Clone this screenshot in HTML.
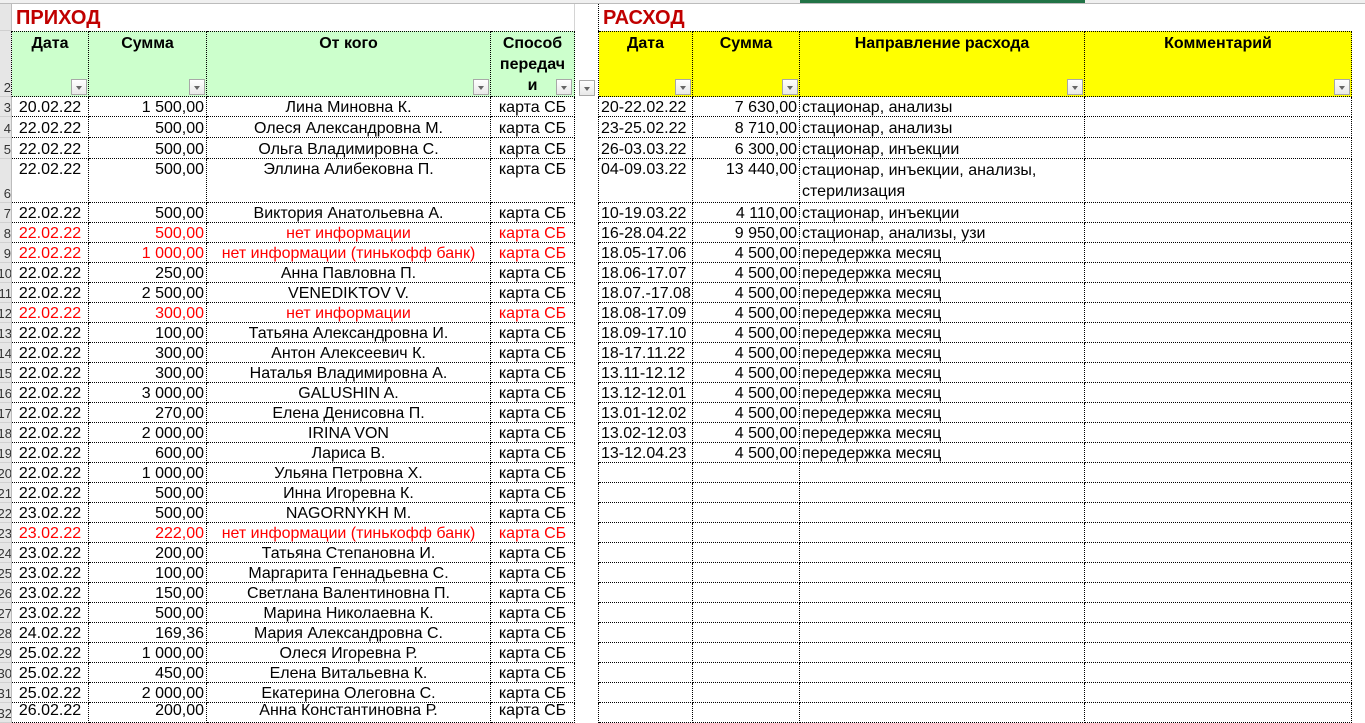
<!DOCTYPE html>
<html><head><meta charset="utf-8">
<style>
body{margin:0;width:1365px;height:710px;overflow:hidden;background:#fff;font-family:"Liberation Sans",sans-serif;position:relative}
.top{position:absolute;left:0;top:0;width:1365px;height:4px;background:#f0f0f0;border-bottom:1px solid #bcbcbc;box-sizing:border-box}
.sel{position:absolute;left:800px;top:0;width:285px;height:3px;background:#217346}
table{position:absolute;left:0;top:4px;width:1365px;border-collapse:separate;border-spacing:0;table-layout:fixed}
td{padding:0;font-size:16px;line-height:16px;vertical-align:bottom;white-space:nowrap;overflow:hidden;color:#000}
td.rn{background:#e6e6e6;border-right:1px solid #bcbcbc;border-bottom:1px solid #d0d0d0;font-size:13px;text-align:right;direction:rtl;overflow:hidden;color:#333}
td.d{border-right:1px dotted #000;border-bottom:1px dotted #000}
.title{color:#c00000;font-weight:bold;font-size:20px;vertical-align:middle;padding-left:4px;line-height:22px}
.hg{background:#ccffcc}.hy{background:#ffff00}
.h{font-weight:bold;font-size:16px;vertical-align:top;text-align:center;position:relative;line-height:21px;white-space:normal;border-top:1px dotted #000}
.hin{height:64px;overflow:hidden;padding-top:1px;box-sizing:border-box}
.dd{position:absolute;right:1px;bottom:1px;width:16px;height:16px;border:1px solid #a8a8a8;box-sizing:border-box;background:linear-gradient(#fff,#e8e8e8)}
.dd:after{content:"";position:absolute;left:4px;top:6px;border-left:3px solid transparent;border-right:3px solid transparent;border-top:4px solid #666}
.c{text-align:center}.r{text-align:right;padding-right:2px}.l{text-align:left;padding-left:2px}
.red td.d{color:#ff0000}
td.rd{color:#000!important}
td.wrap{white-space:normal;vertical-align:top;line-height:21px;padding-top:1px}
td.tp{vertical-align:top;padding-top:3px}
</style></head><body>
<div class="top"></div><div class="sel"></div>
<table>
<colgroup><col style="width:12px"><col style="width:77px"><col style="width:118px"><col style="width:284px"><col style="width:84px"><col style="width:24px"><col style="width:94px"><col style="width:107px"><col style="width:285px"><col style="width:267px"><col style="width:13px"></colgroup>
<tr style="height:27px"><td class="rn"></td><td class="title" colspan="3">ПРИХОД</td><td style="border-right:1px solid #d4d4d4"></td><td style="border-right:1px dotted #000"></td><td class="title" colspan="2">РАСХОД</td><td></td><td></td><td></td></tr>
<tr style="height:65px"><td class="rn" style="border-right:1px dotted #000">2</td>
<td class="d h hg"><div class="hin">Дата</div><div class="dd"></div></td><td class="d h hg"><div class="hin">Сумма</div><div class="dd"></div></td><td class="d h hg"><div class="hin">От кого</div><div class="dd"></div></td><td class="d h hg"><div class="hin">Способ<br>передач<br>и</div><div class="dd" style="right:2px"></div></td><td class="h" style="border-right:1px dotted #000;border-top:none"><div class="dd" style="right:3px"></div></td>
<td class="d h hy"><div class="hin">Дата</div><div class="dd"></div></td><td class="d h hy"><div class="hin">Сумма</div><div class="dd"></div></td><td class="d h hy"><div class="hin">Направление расхода</div><div class="dd"></div></td><td class="d h hy"><div class="hin">Комментарий</div><div class="dd"></div></td><td></td></tr>
<tr style="height:20px"><td class="rn">3</td><td class="d c">20.02.22</td><td class="d r">1 500,00</td><td class="d c">Лина Миновна К.</td><td class="d c">карта СБ</td><td style="border-right:1px dotted #000"></td><td class="d l">20-22.02.22</td><td class="d r">7 630,00</td><td class="d l">стационар, анализы</td><td class="d"></td><td></td></tr>
<tr style="height:21px"><td class="rn">4</td><td class="d c">22.02.22</td><td class="d r">500,00</td><td class="d c">Олеся Александровна М.</td><td class="d c">карта СБ</td><td style="border-right:1px dotted #000"></td><td class="d l">23-25.02.22</td><td class="d r">8 710,00</td><td class="d l">стационар, анализы</td><td class="d"></td><td></td></tr>
<tr style="height:21px"><td class="rn">5</td><td class="d c">22.02.22</td><td class="d r">500,00</td><td class="d c">Ольга Владимировна С.</td><td class="d c">карта СБ</td><td style="border-right:1px dotted #000"></td><td class="d l">26-03.03.22</td><td class="d r">6 300,00</td><td class="d l">стационар, инъекции</td><td class="d"></td><td></td></tr>
<tr style="height:44px"><td class="rn">6</td><td class="d c tp">22.02.22</td><td class="d r tp">500,00</td><td class="d c tp">Эллина Алибековна П.</td><td class="d c tp">карта СБ</td><td style="border-right:1px dotted #000"></td><td class="d l tp">04-09.03.22</td><td class="d r tp">13 440,00</td><td class="d l wrap">стационар, инъекции, анализы,<br>стерилизация</td><td class="d"></td><td></td></tr>
<tr style="height:20px"><td class="rn">7</td><td class="d c">22.02.22</td><td class="d r">500,00</td><td class="d c">Виктория Анатольевна А.</td><td class="d c">карта СБ</td><td style="border-right:1px dotted #000"></td><td class="d l">10-19.03.22</td><td class="d r">4 110,00</td><td class="d l">стационар, инъекции</td><td class="d"></td><td></td></tr>
<tr style="height:20px" class="red"><td class="rn">8</td><td class="d c">22.02.22</td><td class="d r">500,00</td><td class="d c">нет информации</td><td class="d c">карта СБ</td><td style="border-right:1px dotted #000"></td><td class="d l rd">16-28.04.22</td><td class="d r rd">9 950,00</td><td class="d l rd">стационар, анализы, узи</td><td class="d"></td><td></td></tr>
<tr style="height:20px" class="red"><td class="rn">9</td><td class="d c">22.02.22</td><td class="d r">1 000,00</td><td class="d c">нет информации (тинькофф банк)</td><td class="d c">карта СБ</td><td style="border-right:1px dotted #000"></td><td class="d l rd">18.05-17.06</td><td class="d r rd">4 500,00</td><td class="d l rd">передержка месяц</td><td class="d"></td><td></td></tr>
<tr style="height:20px"><td class="rn">10</td><td class="d c">22.02.22</td><td class="d r">250,00</td><td class="d c">Анна Павловна П.</td><td class="d c">карта СБ</td><td style="border-right:1px dotted #000"></td><td class="d l">18.06-17.07</td><td class="d r">4 500,00</td><td class="d l">передержка месяц</td><td class="d"></td><td></td></tr>
<tr style="height:20px"><td class="rn">11</td><td class="d c">22.02.22</td><td class="d r">2 500,00</td><td class="d c">VENEDIKTOV V.</td><td class="d c">карта СБ</td><td style="border-right:1px dotted #000"></td><td class="d l">18.07.-17.08</td><td class="d r">4 500,00</td><td class="d l">передержка месяц</td><td class="d"></td><td></td></tr>
<tr style="height:20px" class="red"><td class="rn">12</td><td class="d c">22.02.22</td><td class="d r">300,00</td><td class="d c">нет информации</td><td class="d c">карта СБ</td><td style="border-right:1px dotted #000"></td><td class="d l rd">18.08-17.09</td><td class="d r rd">4 500,00</td><td class="d l rd">передержка месяц</td><td class="d"></td><td></td></tr>
<tr style="height:20px"><td class="rn">13</td><td class="d c">22.02.22</td><td class="d r">100,00</td><td class="d c">Татьяна Александровна И.</td><td class="d c">карта СБ</td><td style="border-right:1px dotted #000"></td><td class="d l">18.09-17.10</td><td class="d r">4 500,00</td><td class="d l">передержка месяц</td><td class="d"></td><td></td></tr>
<tr style="height:20px"><td class="rn">14</td><td class="d c">22.02.22</td><td class="d r">300,00</td><td class="d c">Антон Алексеевич К.</td><td class="d c">карта СБ</td><td style="border-right:1px dotted #000"></td><td class="d l">18-17.11.22</td><td class="d r">4 500,00</td><td class="d l">передержка месяц</td><td class="d"></td><td></td></tr>
<tr style="height:20px"><td class="rn">15</td><td class="d c">22.02.22</td><td class="d r">300,00</td><td class="d c">Наталья Владимировна А.</td><td class="d c">карта СБ</td><td style="border-right:1px dotted #000"></td><td class="d l">13.11-12.12</td><td class="d r">4 500,00</td><td class="d l">передержка месяц</td><td class="d"></td><td></td></tr>
<tr style="height:20px"><td class="rn">16</td><td class="d c">22.02.22</td><td class="d r">3 000,00</td><td class="d c">GALUSHIN A.</td><td class="d c">карта СБ</td><td style="border-right:1px dotted #000"></td><td class="d l">13.12-12.01</td><td class="d r">4 500,00</td><td class="d l">передержка месяц</td><td class="d"></td><td></td></tr>
<tr style="height:20px"><td class="rn">17</td><td class="d c">22.02.22</td><td class="d r">270,00</td><td class="d c">Елена Денисовна П.</td><td class="d c">карта СБ</td><td style="border-right:1px dotted #000"></td><td class="d l">13.01-12.02</td><td class="d r">4 500,00</td><td class="d l">передержка месяц</td><td class="d"></td><td></td></tr>
<tr style="height:20px"><td class="rn">18</td><td class="d c">22.02.22</td><td class="d r">2 000,00</td><td class="d c">IRINA VON</td><td class="d c">карта СБ</td><td style="border-right:1px dotted #000"></td><td class="d l">13.02-12.03</td><td class="d r">4 500,00</td><td class="d l">передержка месяц</td><td class="d"></td><td></td></tr>
<tr style="height:20px"><td class="rn">19</td><td class="d c">22.02.22</td><td class="d r">600,00</td><td class="d c">Лариса В.</td><td class="d c">карта СБ</td><td style="border-right:1px dotted #000"></td><td class="d l">13-12.04.23</td><td class="d r">4 500,00</td><td class="d l">передержка месяц</td><td class="d"></td><td></td></tr>
<tr style="height:20px"><td class="rn">20</td><td class="d c">22.02.22</td><td class="d r">1 000,00</td><td class="d c">Ульяна Петровна Х.</td><td class="d c">карта СБ</td><td style="border-right:1px dotted #000"></td><td class="d"></td><td class="d"></td><td class="d"></td><td class="d"></td><td></td></tr>
<tr style="height:20px"><td class="rn">21</td><td class="d c">22.02.22</td><td class="d r">500,00</td><td class="d c">Инна Игоревна К.</td><td class="d c">карта СБ</td><td style="border-right:1px dotted #000"></td><td class="d"></td><td class="d"></td><td class="d"></td><td class="d"></td><td></td></tr>
<tr style="height:20px"><td class="rn">22</td><td class="d c">23.02.22</td><td class="d r">500,00</td><td class="d c">NAGORNYKH M.</td><td class="d c">карта СБ</td><td style="border-right:1px dotted #000"></td><td class="d"></td><td class="d"></td><td class="d"></td><td class="d"></td><td></td></tr>
<tr style="height:20px" class="red"><td class="rn">23</td><td class="d c">23.02.22</td><td class="d r">222,00</td><td class="d c">нет информации (тинькофф банк)</td><td class="d c">карта СБ</td><td style="border-right:1px dotted #000"></td><td class="d"></td><td class="d"></td><td class="d"></td><td class="d"></td><td></td></tr>
<tr style="height:20px"><td class="rn">24</td><td class="d c">23.02.22</td><td class="d r">200,00</td><td class="d c">Татьяна Степановна И.</td><td class="d c">карта СБ</td><td style="border-right:1px dotted #000"></td><td class="d"></td><td class="d"></td><td class="d"></td><td class="d"></td><td></td></tr>
<tr style="height:20px"><td class="rn">25</td><td class="d c">23.02.22</td><td class="d r">100,00</td><td class="d c">Маргарита Геннадьевна С.</td><td class="d c">карта СБ</td><td style="border-right:1px dotted #000"></td><td class="d"></td><td class="d"></td><td class="d"></td><td class="d"></td><td></td></tr>
<tr style="height:20px"><td class="rn">26</td><td class="d c">23.02.22</td><td class="d r">150,00</td><td class="d c">Светлана Валентиновна П.</td><td class="d c">карта СБ</td><td style="border-right:1px dotted #000"></td><td class="d"></td><td class="d"></td><td class="d"></td><td class="d"></td><td></td></tr>
<tr style="height:20px"><td class="rn">27</td><td class="d c">23.02.22</td><td class="d r">500,00</td><td class="d c">Марина Николаевна К.</td><td class="d c">карта СБ</td><td style="border-right:1px dotted #000"></td><td class="d"></td><td class="d"></td><td class="d"></td><td class="d"></td><td></td></tr>
<tr style="height:20px"><td class="rn">28</td><td class="d c">24.02.22</td><td class="d r">169,36</td><td class="d c">Мария Александровна С.</td><td class="d c">карта СБ</td><td style="border-right:1px dotted #000"></td><td class="d"></td><td class="d"></td><td class="d"></td><td class="d"></td><td></td></tr>
<tr style="height:20px"><td class="rn">29</td><td class="d c">25.02.22</td><td class="d r">1 000,00</td><td class="d c">Олеся Игоревна Р.</td><td class="d c">карта СБ</td><td style="border-right:1px dotted #000"></td><td class="d"></td><td class="d"></td><td class="d"></td><td class="d"></td><td></td></tr>
<tr style="height:20px"><td class="rn">30</td><td class="d c">25.02.22</td><td class="d r">450,00</td><td class="d c">Елена Витальевна К.</td><td class="d c">карта СБ</td><td style="border-right:1px dotted #000"></td><td class="d"></td><td class="d"></td><td class="d"></td><td class="d"></td><td></td></tr>
<tr style="height:20px"><td class="rn">31</td><td class="d c">25.02.22</td><td class="d r">2 000,00</td><td class="d c">Екатерина Олеговна С.</td><td class="d c">карта СБ</td><td style="border-right:1px dotted #000"></td><td class="d"></td><td class="d"></td><td class="d"></td><td class="d"></td><td></td></tr>
<tr style="height:20px"><td class="rn">32</td><td class="d c" style="vertical-align:top">26.02.22</td><td class="d r" style="vertical-align:top">200,00</td><td class="d c" style="vertical-align:top">Анна Константиновна Р.</td><td class="d c" style="vertical-align:top">карта СБ</td><td style="border-right:1px dotted #000"></td><td class="d"></td><td class="d"></td><td class="d"></td><td class="d"></td><td></td></tr>
</table>
</body></html>
